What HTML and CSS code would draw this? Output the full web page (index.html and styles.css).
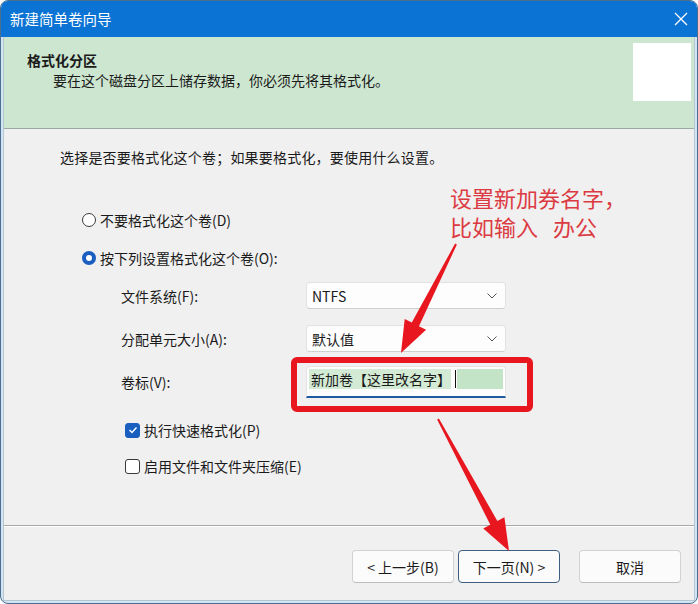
FILE: index.html
```html
<!DOCTYPE html>
<html lang="zh-CN">
<head>
<meta charset="utf-8">
<title>新建简单卷向导</title>
<link rel="stylesheet" href="styles.css">
</head>
<body>
<div class="window">
  <div class="titlebar">
    <span class="title">新建简单卷向导</span>
    <svg class="close" width="14" height="14" viewBox="0 0 14 14"><path d="M1 1 L13 13 M13 1 L1 13" stroke="#fff" stroke-width="1.3" fill="none"/></svg>
  </div>
  <div class="frame">
    <div class="header">
      <div class="header-text">
        <div class="h-title">格式化分区</div>
        <div class="h-sub">要在这个磁盘分区上储存数据，你必须先将其格式化。</div>
      </div>
      <div class="h-icon"></div>
    </div>
    <div class="body">
      <p class="intro">选择是否要格式化这个卷；如果要格式化，要使用什么设置。</p>
      <div class="radio-row r1"><span class="radio"></span><span>不要格式化这个卷(D)</span></div>
      <div class="radio-row r2"><span class="radio checked"></span><span>按下列设置格式化这个卷(O):</span></div>
      <div class="form">
        <div class="f-row fr1"><span class="lbl">文件系统(F):</span><div class="combo"><span>NTFS</span><svg width="10" height="6" viewBox="0 0 10 6"><path d="M0.5 0.5 L5 5 L9.5 0.5" stroke="#555" stroke-width="1" fill="none"/></svg></div></div>
        <div class="f-row fr2"><span class="lbl">分配单元大小(A):</span><div class="combo"><span>默认值</span><svg width="10" height="6" viewBox="0 0 10 6"><path d="M0.5 0.5 L5 5 L9.5 0.5" stroke="#555" stroke-width="1" fill="none"/></svg></div></div>
        <div class="f-row fr3"><span class="lbl">卷标(V):</span><div class="field"><div class="sel"><span class="sel-text">新加卷【这里改名字】</span><span class="caret"></span><span class="sel-rest"></span></div></div></div>
      </div>
      <div class="check-row c1"><span class="check checked"><svg width="10" height="8" viewBox="0 0 10 8"><path d="M1.5 4 L4 6.5 L8.5 1.5" stroke="#fff" stroke-width="1.4" fill="none"/></svg></span><span>执行快速格式化(P)</span></div>
      <div class="check-row c2"><span class="check"></span><span>启用文件和文件夹压缩(E)</span></div>
    </div>
    <div class="footer">
      <button class="btn">&lt; 上一步(B)</button>
      <button class="btn primary">下一页(N) &gt;</button>
      <button class="btn cancel">取消</button>
    </div>
  </div>

  <div class="red-box"></div>
  <div class="note">设置新加券名字，<br>比如输入<span class="gap"></span>办公</div>
  <svg class="arrows" width="698" height="604" viewBox="0 0 698 604">
    <polygon fill="#e8161f" points="455.9,243.45 417.97,325.2 425.1,328.8 400,352 403.7,318.0 410.8,321.6 454.1,242.55"/>
    <polygon fill="#e8161f" points="436.12,418.47 489.32,523.71 482.27,527.5 508,550 503.41,516.14 496.36,519.93 437.88,417.53"/>
  </svg>
</div>
</body>
</html>
```
FILE: styles.css
```css
* { box-sizing: border-box; }
html, body { margin: 0; padding: 0; background: #ffffff; }
body {
  font-family: "Noto Sans CJK SC", "Microsoft YaHei", sans-serif;
  font-size: 14px;
  color: #1a1a1a;
}
.window {
  position: relative;
  width: 698px;
  height: 604px;
  border: 1px solid #4a6f8e;
  border-radius: 8px;
  overflow: hidden;
  background: #d3e4f2;
  display: flex;
  flex-direction: column;
}
.titlebar {
  height: 36px;
  background: #0b73d3;
  display: flex;
  align-items: center;
  justify-content: space-between;
  padding: 0 8px 0 9px;
  flex-shrink: 0;
}
.title { color: #fff; font-size: 14.5px; line-height: 20px; }
.close { margin-right: 1px; }
.frame {
  flex: 1;
  margin: 0 2px 2px;
  border: 1px solid #b5c6d4;
  border-top: none;
  display: flex;
  flex-direction: column;
  background: #f0f0f0;
}
.header {
  height: 92px;
  background: #cde6d0;
  border-bottom: 1px solid #9aa8a6;
  display: flex;
  justify-content: space-between;
  padding: 6px 3px 0 23px;
  flex-shrink: 0;
}
.header-text { padding-top: 7px; }
.h-title { font-weight: bold; line-height: 20px; font-size: 14px; }
.h-sub { line-height: 20px; padding-left: 26px; }
.h-icon { width: 58px; height: 58px; background: #ffffff; }
.body {
  flex: 1;
  display: flex;
  flex-direction: column;
  padding-left: 56px;
  border-bottom: 1px solid #a7a7a7;
  box-shadow: 0 1px 0 #ffffff;
}
.intro { margin: 18px 0 0; line-height: 20px; letter-spacing: 0.2px; }
.radio-row, .check-row {
  display: flex;
  align-items: center;
  gap: 4px;
  height: 20px;
  line-height: 20px;
}
.r1 { margin: 43px 0 0 22px; }
.r2 { margin: 18px 0 0 22px; }
.radio {
  width: 14px; height: 14px;
  border-radius: 50%;
  border: 1px solid #3a3a3a;
  background: #fff;
}
.radio.checked {
  border: 4px solid #1a5fc0;
  background: #fff;
}
.form { display: flex; flex-direction: column; margin-left: 61px; }
.f-row { display: grid; grid-template-columns: 185px 200px; align-items: center; }
.fr1 { margin-top: 14px; }
.fr2 { margin-top: 16px; }
.fr3 { margin-top: 14px; }
.combo {
  height: 27px;
  background: #fdfdfd;
  border: 1px solid #e2e2e2;
  border-bottom-color: #cfcfcf;
  border-radius: 4px;
  display: flex;
  align-items: center;
  justify-content: space-between;
  padding: 0 8px 0 5px;
}
.field {
  height: 32px;
  background: #fdfdfd;
  border: 1px solid #e4e4e4;
  border-bottom: 2px solid #1d5a9f;
  border-radius: 4px 4px 0 0;
  padding: 2px 2px 0 2px;
}
.sel { display: flex; height: 20px; align-items: center; }
.sel-text { background: #d3ead4; line-height: 20px; padding-left: 2px; }
.caret { width: 1px; height: 18px; background: #111; margin: 0 1px 0 4px; }
.sel-rest { flex: 1; height: 20px; background: #c4e4c7; }
.c1 { margin: 22px 0 0 65px; }
.c2 { margin: 16px 0 0 65px; }
.check {
  width: 15px; height: 15px;
  border: 1px solid #3a3a3a;
  border-radius: 3px;
  background: #fff;
  display: flex; align-items: center; justify-content: center;
}
.check.checked { background: #1a5fc0; border-color: #1a5fc0; }
.footer {
  height: 74px;
  display: flex;
  align-items: flex-start;
  padding: 24px 0 0 348px;
  gap: 4px;
  flex-shrink: 0;
}
.btn {
  width: 102px;
  height: 33px;
  font-family: inherit;
  font-size: 14px;
  color: #1a1a1a;
  background: #fbfbfb;
  border: 1px solid #d2d2d2;
  border-bottom-color: #bdbdbd;
  border-radius: 4px;
  padding: 0;
}
.btn.primary { border: 1px solid #3d5f82; }
.btn.cancel { margin-left: 15px; }
.red-box {
  position: absolute;
  left: 290px;
  top: 356px;
  width: 242px;
  height: 55px;
  border: 6px solid #e8161f;
  border-radius: 6px;
}
.note {
  position: absolute;
  left: 449px;
  top: 182px;
  font-size: 22px;
  line-height: 29px;
  color: #dc3a42;
}
.gap { display: inline-block; width: 15px; }
.arrows { position: absolute; left: 0; top: 0; pointer-events: none; }
```
